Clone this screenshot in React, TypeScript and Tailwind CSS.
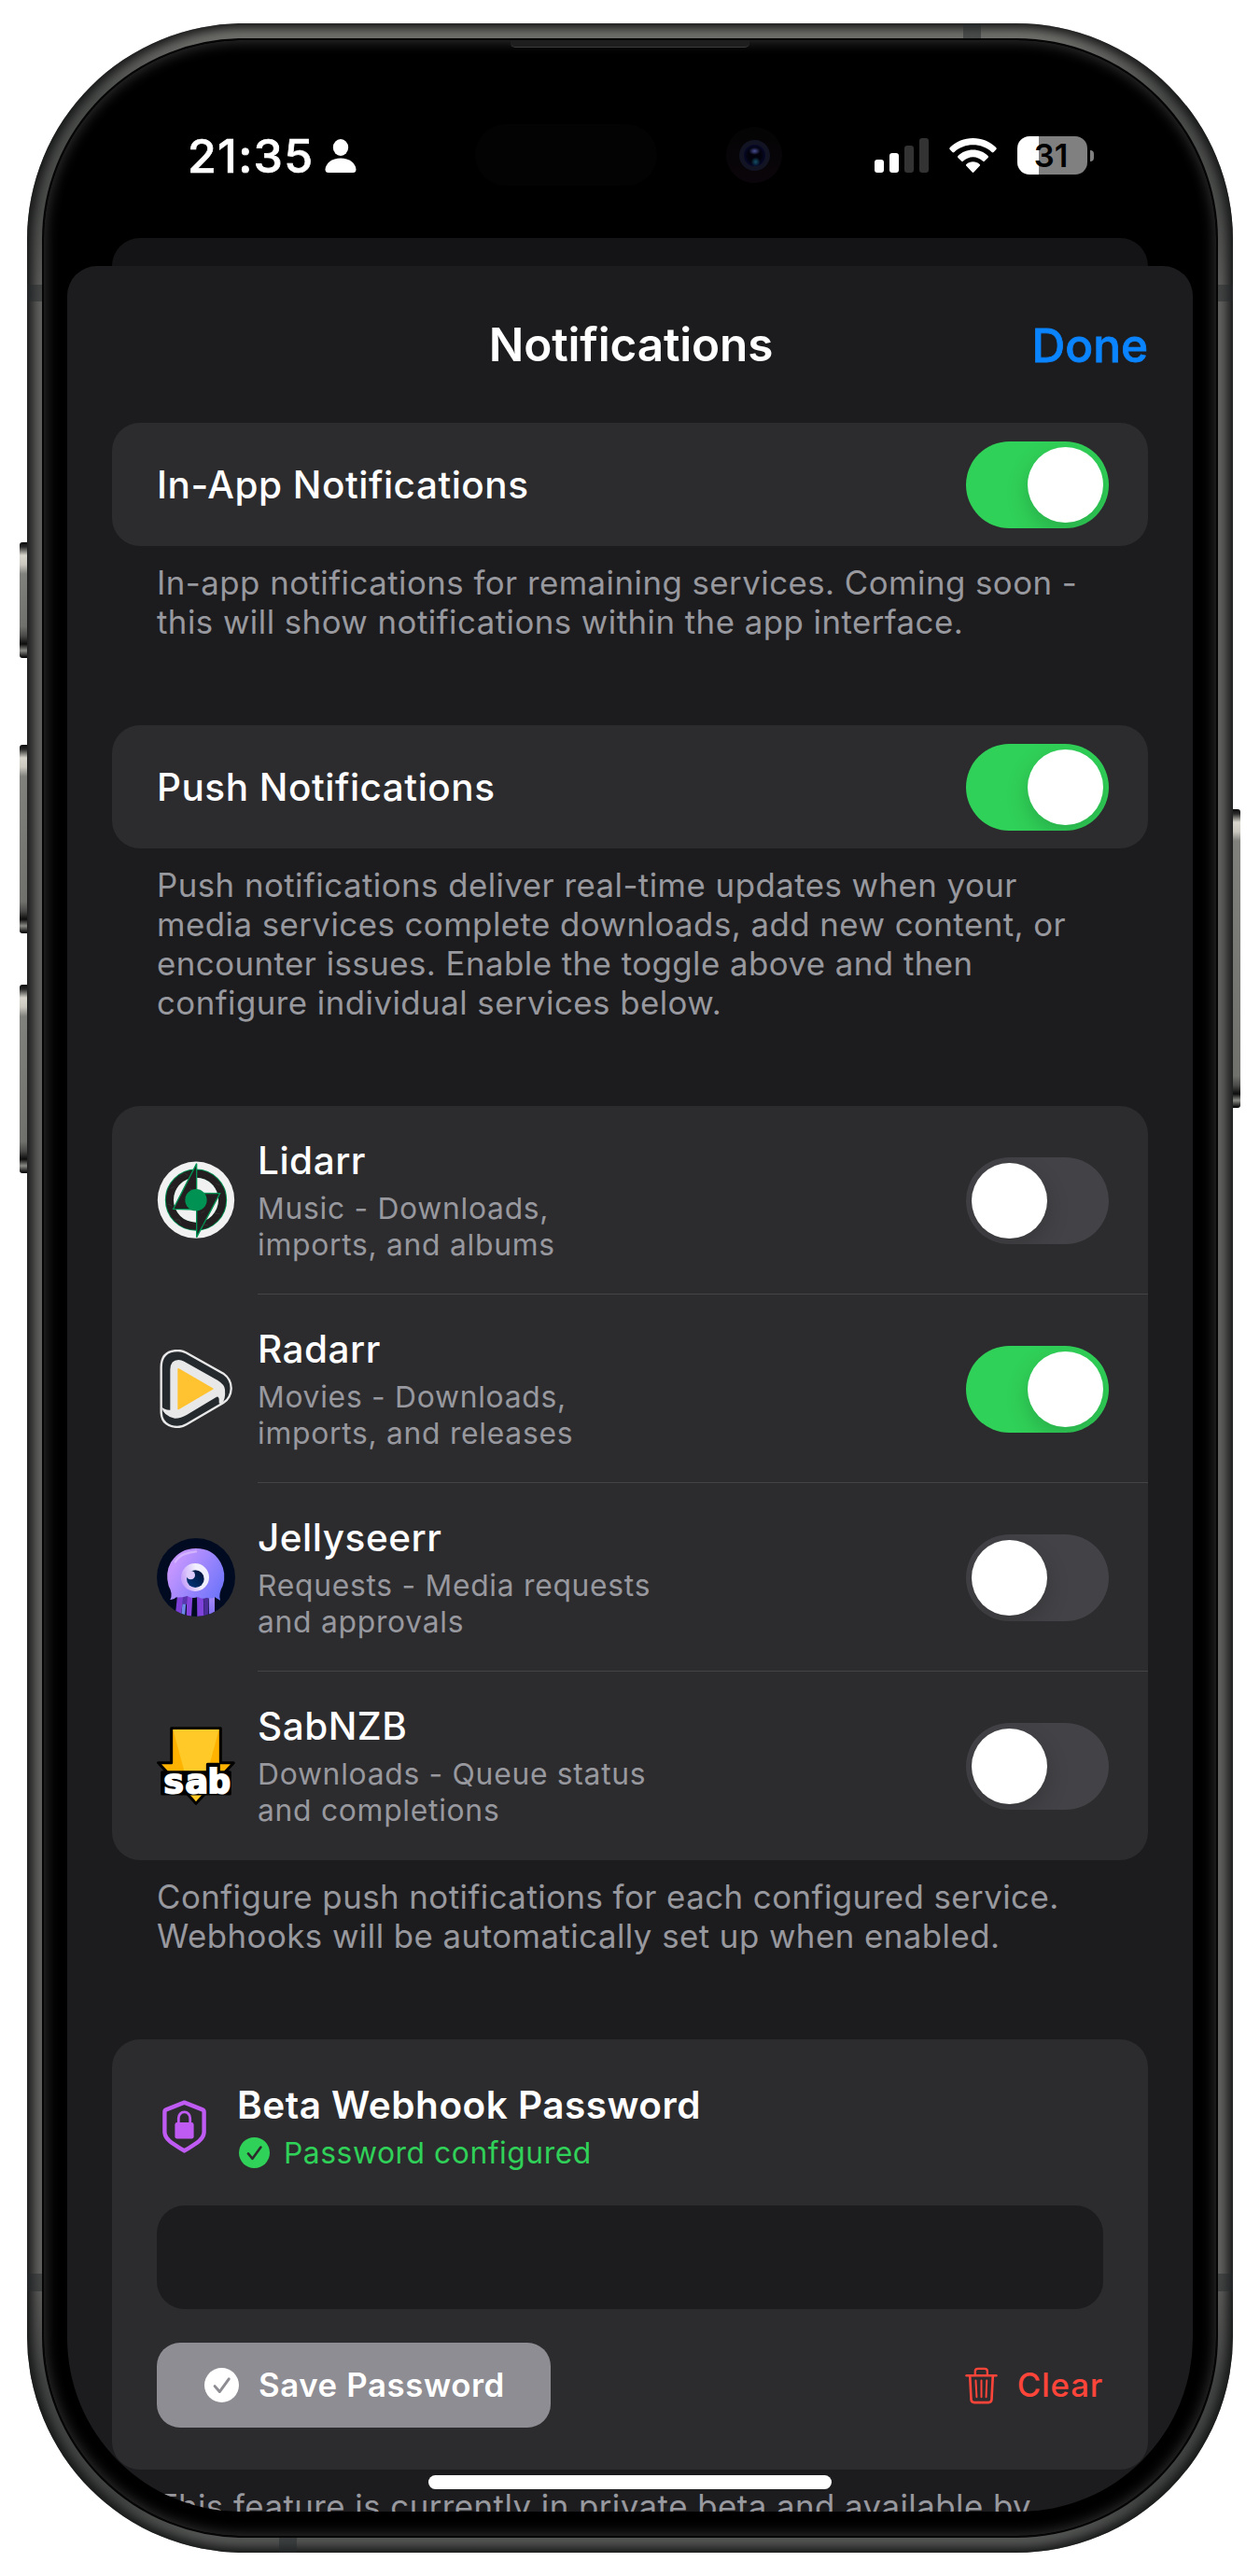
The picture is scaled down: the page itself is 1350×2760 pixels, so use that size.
import type { ReactNode } from "react";

function LidarrIcon() {
  return (
    <svg viewBox="54 72 252 252" className="size-[84px] shrink-0">
      <circle cx="180" cy="197" r="123.5" fill="#f1f1f1" />
      <circle cx="180" cy="197" r="84" fill="none" stroke="#009252" strokeWidth="31" />
      <circle cx="180" cy="197" r="84" fill="none" stroke="#231f20" strokeWidth="25" />
      <circle cx="180" cy="197" r="72" fill="#f1f1f1" />
      <path d="M182 80 L107 226 L182 228 Z" fill="#231f20" stroke="#009252" strokeWidth="4" />
      <path d="M182 317 L257 176 L182 175 Z" fill="#231f20" stroke="#009252" strokeWidth="4" />
      <path
        d="M128 118 l14 -8 l12 8 M98 160 l12 -6 M90 210 l12 6 M110 262 l16 -2 l6 12 M200 276 l18 2 M240 240 l16 2 M256 150 l-12 -6 M160 160 l10 8 M196 240 l12 -8"
        fill="none"
        stroke="#3d393a"
        strokeWidth="2"
      />
      <circle cx="180" cy="197" r="35" fill="#009252" />
    </svg>
  );
}

function RadarrIcon() {
  return (
    <svg viewBox="54 678 252 252" className="size-[84px] shrink-0">
      <path
        d="M68 735 Q68 681 122 681 Q135 681 148 688 L268 755 Q294 774 293 804 Q292 834 268 849 L150 918 Q135 927 120 927 Q70 924 68 880 Z"
        fill="#24292e"
        stroke="#e8e8e8"
        strokeWidth="7"
      />
      <path
        d="M97 742 Q98 711 124 711 Q133 711 142 716 L250 777 Q272 791 273 806 Q276 838 262 854 L254 850 Q256 825 246 830 L150 888 Q132 899 112 899 Q76 893 69 862 Q80 873 97 872 Z"
        fill="#e8e8e8"
      />
      <path d="M123 740 L234 804 L123 869 Z" fill="#ffc230" stroke="#ffc230" strokeWidth="4" strokeLinejoin="round" />
    </svg>
  );
}

function JellyseerrIcon() {
  return (
    <svg viewBox="54 84 252 252" className="size-[84px] shrink-0">
      <defs>
        <linearGradient id="dome" x1="0" y1="0.2" x2="1" y2="0.8">
          <stop offset="0.15" stopColor="#c395ff" />
          <stop offset="1" stopColor="#6d74fa" />
        </linearGradient>
        <linearGradient id="tentacle" x1="0" y1="0" x2="0" y2="1">
          <stop offset="0" stopColor="#a78bfa" />
          <stop offset="1" stopColor="#7c6cf0" />
        </linearGradient>
        <linearGradient id="eye" x1="0" y1="0.4" x2="0.7" y2="0.2">
          <stop offset="0" stopColor="#c8a5fb" />
          <stop offset="0.8" stopColor="#f1effd" />
        </linearGradient>
        <linearGradient id="pupil" x1="0" y1="1" x2="1" y2="0">
          <stop offset="0" stopColor="#003a7e" />
          <stop offset="1" stopColor="#001033" />
        </linearGradient>
        <clipPath id="disc">
          <circle cx="180" cy="210" r="126" />
        </clipPath>
      </defs>
      <circle cx="180" cy="210" r="126" fill="#000b22" />
      <g clipPath="url(#disc)">
        <path d="M120 268 h20 l-9 70 h-18 Z" fill="#7c40d6" />
        <path d="M139 268 h11 l-6 70 h-12 Z" fill="#6d86e8" />
        <path d="M138 268 h13 l-1 28 h-14 Z" fill="#5a35b0" />
        <path d="M151 268 h18 l-4 70 h-16 Z" fill="#8544dc" />
        <path d="M183 268 h20 l3 70 h-22 Z" fill="#7f42da" />
        <path d="M204 268 h16 v70 h-14 Z" fill="#4c2c98" />
        <path d="M221 268 h19 v70 h-18 Z" fill="url(#tentacle)" />
      </g>
      <path
        d="M97 282 Q107 264 92 238 Q80 196 99 162 Q128 117 180 117 Q234 117 259 162 Q279 198 266 237 Q251 264 258 284 Q246 278 241 274 Q228 281 215 275 Q200 282 186 273 Q168 281 152 270 Q132 276 117 274 Q108 283 97 282 Z"
        fill="url(#dome)"
      />
      <path d="M113 160 Q130 131 180 127" fill="none" stroke="#d3b4ff" strokeWidth="7" strokeLinecap="round" />
      <circle cx="177" cy="210" r="45" fill="url(#eye)" />
      <circle cx="178" cy="215" r="28" fill="url(#pupil)" />
      <circle cx="163" cy="203" r="14" fill="#dccbfb" />
    </svg>
  );
}

function SabIcon() {
  return (
    <svg viewBox="54 690 252 252" className="size-[84px] shrink-0">
      <path
        d="M101 695 H259 V806 H301 L180 937 L59 806 H101 Z"
        fill="#ffb300"
        stroke="#000000"
        strokeWidth="9"
        strokeLinejoin="round"
      />
      <path d="M106 699 H254 L218 832 H142 Z" fill="#ffca28" />
      <path d="M164 908 H196 L180 930 Z" fill="#ffca28" />
      <path
        d="M71 836 H217 V811 H253 V836 H289 V906 H71 Z"
        fill="#000000"
        stroke="#000000"
        strokeWidth="9"
        strokeLinejoin="round"
      />
      <text
        x="72"
        y="902"
        fontSize="108"
        textLength="219"
        lengthAdjust="spacingAndGlyphs"
        fill="#ffffff"
        stroke="#ffffff"
        strokeWidth="6"
        className="font-['DejaVu_Sans_Mono'] font-bold"
      >
        sab
      </text>
    </svg>
  );
}

function ShieldLockIcon() {
  return (
    <svg viewBox="0 0 47 57" className="h-[57px] w-[47px] shrink-0">
      <path
        d="M23.5 2.6 L43 10.4 Q44.6 11 44.6 13 V34 C44.6 43 34 48 23.5 54.4 C13 48 2.4 43 2.4 34 V13 Q2.4 11 4 10.4 Z"
        fill="none"
        stroke="#bf5af2"
        strokeWidth="4.4"
        strokeLinejoin="round"
      />
      <rect x="13.4" y="24" width="20.2" height="17.6" rx="2.4" fill="#bf5af2" />
      <path d="M17.3 25 V19.5 A6.2 6.6 0 0 1 29.7 19.5 V25" fill="none" stroke="#bf5af2" strokeWidth="2.8" />
    </svg>
  );
}

function TrashIcon() {
  return (
    <svg
      viewBox="401 708 107 121"
      className="h-[40px] w-[35px] shrink-0"
      fill="none"
      stroke="#ff453a"
      strokeLinecap="round"
      strokeLinejoin="round"
    >
      <path d="M406 735.500 H503" strokeWidth="8" />
      <path d="M434 733 V722 Q434 713 443 713 H465 Q474 713 474 722 V733" strokeWidth="7" />
      <path d="M417 738 L421 815 Q422 824 431 824 H478 Q487 824 488 815 L492 738" strokeWidth="8" />
      <path d="M436 752 L439 806 M454.500 752 V806 M472 752 L470 806" strokeWidth="6" />
    </svg>
  );
}

function CheckCircle({ size, color, mark }: { size: string; color: string; mark: string }) {
  return (
    <svg viewBox="0 0 100 100" className={`${size} ${color} shrink-0`}>
      <circle cx="50" cy="50" r="50" fill="currentColor" />
      <path
        d="M30 53 L44 69 L71 32"
        fill="none"
        className={mark}
        strokeWidth="8"
        strokeLinecap="round"
        strokeLinejoin="round"
      />
    </svg>
  );
}

function Toggle({ on = false }: { on?: boolean }) {
  return (
    <div
      className={`mt-px flex h-[93px] w-[153px] shrink-0 overflow-hidden rounded-full p-[6px] ${
        on ? "justify-end bg-[#30d158]" : "justify-start bg-[#434246]"
      }`}
    >
      <div className="size-[81px] rounded-full bg-white shadow-[0_9px_24px_rgba(0,0,0,0.18)]" />
    </div>
  );
}

function Note({ children }: { children: ReactNode }) {
  return (
    <p className="mt-[18px] pl-12 text-[34.8px]/[42px] tracking-[0.47px] whitespace-nowrap text-[#98989f]">
      {children}
    </p>
  );
}

function SettingCard({ label }: { label: string }) {
  return (
    <div className="flex h-[132px] items-center justify-between rounded-[30px] bg-[#2c2c2e] pr-[42px] pl-12">
      <span className="text-[40.5px]/[51px] font-medium tracking-[0.5px] text-white">{label}</span>
      <Toggle on />
    </div>
  );
}

const services = [
  { name: "Lidarr", lines: ["Music - Downloads,", "imports, and albums"], on: false, icon: <LidarrIcon /> },
  { name: "Radarr", lines: ["Movies - Downloads,", "imports, and releases"], on: true, icon: <RadarrIcon /> },
  { name: "Jellyseerr", lines: ["Requests - Media requests", "and approvals"], on: false, icon: <JellyseerrIcon /> },
  { name: "SabNZB", lines: ["Downloads - Queue status", "and completions"], on: false, icon: <SabIcon /> },
];

function StatusBar() {
  return (
    <div className="flex h-[186px] items-center justify-between pt-[9px] pr-[106px] pl-[129px]">
      <div className="flex items-center gap-[12px]">
        <span className="text-[50px]/[60px] font-medium tracking-[1.3px] text-white [-webkit-text-stroke:0.7px_#ffffff]">
          21:35
        </span>
        <svg viewBox="0 0 34 36" className="h-[36px] w-[34px]" fill="#ffffff">
          <ellipse cx="17" cy="9" rx="8.200" ry="8.900" />
          <path d="M0.500 32.500 C1 26 7.500 20.500 17 20.500 C26.500 20.500 33 26 33.500 32.500 Q33.500 36 30 36 H4 Q0.500 36 0.500 32.500 Z" />
        </svg>
      </div>
      <div className="flex items-center">
        <div className="flex h-[37px] items-end gap-[6px]">
          <div className="h-[14px] w-[10px] rounded-[3px] bg-white" />
          <div className="h-[21px] w-[10px] rounded-[3px] bg-white" />
          <div className="h-[29px] w-[10px] rounded-[3px] bg-[#333333]" />
          <div className="h-[37px] w-[10px] rounded-[3px] bg-[#333333]" />
        </div>
        <svg viewBox="351 443 153 113" className="ml-[22px] h-[37.5px] w-[51px]" fill="#ffffff">
          <path d="M427.500 443 C456 443 482 454 502 473 Q505 477 502 480 L494 488 Q491 491 488 488 C471 473 450 465 427.500 465 C405 465 384 473 367 488 Q364 491 361 488 L353 480 Q350 477 353 473 C373 454 399 443 427.500 443 Z" />
          <path d="M427.500 481 C446 481 463 488 476 500 Q479 503 476 506 L465 517 Q462 520 459 517 C450 509 439 504 427.500 504 C416 504 405 509 396 517 Q393 520 390 517 L379 506 Q376 503 379 500 C392 488 409 481 427.500 481 Z" />
          <path d="M427.500 519 C436 519 443 522 449 527 Q452 530 449 533 L430 553 Q427.500 556 425 553 L406 533 Q403 530 406 527 C412 522 419 519 427.500 519 Z" />
        </svg>
        <div className="ml-[22px] flex h-[41px] w-[75px] items-center justify-center rounded-[13px] bg-[linear-gradient(90deg,#ffffff_23px,#808080_23px)] pr-[3px]">
          <span className="text-[34.5px]/[41px] font-semibold text-black">31</span>
        </div>
        <div className="ml-[3px] h-[12px] w-[4px] rounded-r-full bg-[#808080]" />
      </div>
    </div>
  );
}

function PasswordCard() {
  return (
    <div className="rounded-[30px] bg-[#2c2c2e] px-12 py-[45px]">
      <div className="flex items-center pl-[6px]">
        <ShieldLockIcon />
        <div className="ml-[33px]">
          <div className="text-[40.5px]/[51px] font-semibold tracking-[0.5px] text-white">Beta Webhook Password</div>
          <div className="mt-[6px] flex items-center gap-[15px] pl-[2px]">
            <CheckCircle size="size-[33px]" color="text-[#30d158]" mark="stroke-[#2c2c2e]" />
            <span className="text-[31.8px]/[39px] tracking-[0.55px] text-[#30d158]">Password configured</span>
          </div>
        </div>
      </div>
      <div className="mt-[37px] h-[111px] rounded-[30px] bg-[#1c1c1e]" />
      <div className="mt-[36px] flex items-center justify-between">
        <div className="flex h-[91px] w-[422px] items-center gap-[21px] rounded-[25px] bg-[#8e8d93] pl-[51px]">
          <CheckCircle size="size-[37px]" color="text-white" mark="stroke-[#8e8d93]" />
          <span className="mb-px text-[34.8px]/[42px] font-semibold tracking-[0.6px] whitespace-nowrap text-white">
            Save Password
          </span>
        </div>
        <div className="flex items-center gap-[21px]">
          <TrashIcon />
          <span className="mb-px text-[34.8px]/[42px] font-medium tracking-[0.8px] text-[#ff453a]">Clear</span>
        </div>
      </div>
    </div>
  );
}

function Screen() {
  return (
    <div className="relative h-[2622px] w-[1206px] overflow-hidden rounded-[186px] bg-black">
      <StatusBar />
      <div className="mx-12 h-[30px] rounded-t-[30px] bg-[#141416]" />
      <div className="h-[2407px] rounded-t-[32px] bg-[#1c1c1e] px-12">
        <div className="grid h-[168px] grid-cols-3 items-center">
          <span />
          <span className="pl-[2px] text-center text-[49.5px]/[60px] font-semibold tracking-[-0.15px] whitespace-nowrap text-white">
            Notifications
          </span>
          <span className="mt-[2px] text-right text-[49.5px]/[60px] font-medium text-[#0a84ff] [-webkit-text-stroke:0.8px_#0a84ff]">
            Done
          </span>
        </div>
        <div className="flex flex-col gap-[90px]">
          <section>
            <SettingCard label="In-App Notifications" />
            <Note>
              In-app notifications for remaining services. Coming soon -
              <br />
              this will show notifications within the app interface.
            </Note>
          </section>
          <section>
            <SettingCard label="Push Notifications" />
            <Note>
              Push notifications deliver real-time updates when your
              <br />
              media services complete downloads, add new content, or
              <br />
              encounter issues. Enable the toggle above and then
              <br />
              configure individual services below.
            </Note>
          </section>
          <section>
            <div className="rounded-[30px] bg-[#2c2c2e] pl-12">
              {services.map((s, i) => (
                <div key={s.name} className="flex h-[202px] items-center gap-6">
                  {s.icon}
                  <div
                    className={`flex h-full flex-1 items-center justify-between border-b pr-[42px] ${
                      i < services.length - 1 ? "border-[#444446]" : "border-transparent"
                    }`}
                  >
                    <div>
                      <div className="text-[40.5px]/[51px] font-medium tracking-[0.5px] text-white">{s.name}</div>
                      <div className="mt-[6px] text-[31.8px]/[39px] tracking-[0.72px] text-[#98989f]">
                        {s.lines[0]}
                        <br />
                        {s.lines[1]}
                      </div>
                    </div>
                    <Toggle on={s.on} />
                  </div>
                </div>
              ))}
            </div>
            <Note>
              Configure push notifications for each configured service.
              <br />
              Webhooks will be automatically set up when enabled.
            </Note>
          </section>
          <section>
            <PasswordCard />
            <Note>This feature is currently in private beta and available by</Note>
          </section>
        </div>
      </div>
      <div className="absolute bottom-6 left-[387px] h-[15px] w-[432px] rounded-full bg-white" />
    </div>
  );
}

const sideButton =
  "absolute w-[9px] bg-[linear-gradient(180deg,#0c0c0c_0,#2a2a2a_5px,#d8d6cc_14px,#c9c7be_24px,#80807c_34px,#70706d_calc(100%-34px),#4a4a48_calc(100%-24px),#0c0c0c_calc(100%-15px),#8a8a86_calc(100%-8px),#0c0c0c_calc(100%-1px))]";
const antenna = "absolute bg-[#26292c]/50";

export default function App() {
  return (
    <div className="h-[2760px] w-[1350px] overflow-hidden bg-white pt-[25px] pl-[29px] font-[Inter,sans-serif] antialiased">
      <div className="relative h-[2710px] w-[1292px]">
        <div className={`${sideButton} top-[556px] left-[-8px] h-[124px] rounded-l-[3px]`} />
        <div className={`${sideButton} top-[773px] left-[-8px] h-[202px] rounded-l-[3px]`} />
        <div className={`${sideButton} top-[1030px] left-[-8px] h-[202px] rounded-l-[3px]`} />
        <div className={`${sideButton} top-[842px] right-[-8px] h-[320px] rounded-r-[3px]`} />
        <div className="relative h-full overflow-hidden rounded-[232px] bg-[linear-gradient(180deg,#84847e_0,#6c6c69_20px,#4c4e4c_80px,#4c4e4c_200px,#646462_300px,#646462_2410px,#444645_2520px,#424443_2650px,#5c5e5c_100%)] p-4 shadow-[inset_0_0_12px_6px_#141515]">
          <div className={`${antenna} top-0 left-[1003px] h-4 w-[19px]`} />
          <div className={`${antenna} bottom-0 left-[270px] h-4 w-[19px]`} />
          <div className={`${antenna} top-[280px] left-0 h-[18px] w-4`} />
          <div className={`${antenna} top-[280px] right-0 h-[18px] w-4`} />
          <div className={`${antenna} top-[2411px] left-0 h-[19px] w-4`} />
          <div className={`${antenna} top-[2411px] right-0 h-[19px] w-4`} />
          <div className="relative rounded-[216px] border-2 border-[#050505] bg-black px-[25px] py-[26px] shadow-[inset_0_0_14px_2px_#303030]">
            <Screen />
            <div className="absolute top-0 left-[500px] h-[8px] w-[256px] rounded-b-[5px] border-b border-[#3a3a3a] bg-[#1e1e1e]" />
            <div className="absolute top-[90px] left-[462px] h-[66px] w-[195px] rounded-full bg-[#030303]" />
            <div className="absolute top-[93px] left-[731px] flex size-[60px] items-center justify-center rounded-full bg-[linear-gradient(180deg,#040404,#0a050a)]">
              <div className="flex size-[33px] items-center justify-center rounded-full bg-[#121424]">
                <div className="size-[23px] rounded-full bg-[radial-gradient(ellipse_6px_4px_at_50%_30%,#4a4f95,transparent),radial-gradient(circle_5px_at_55%_80%,#14506a,transparent),radial-gradient(circle,#02020c_45%,#0b0f4a)]" />
              </div>
            </div>
          </div>
        </div>
      </div>
    </div>
  );
}
